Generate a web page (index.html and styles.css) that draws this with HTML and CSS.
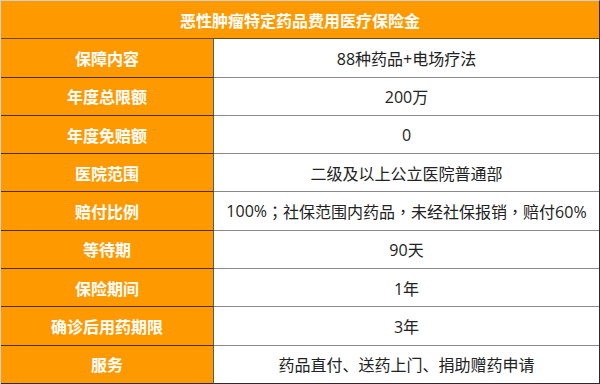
FILE: index.html
```html
<!DOCTYPE html>
<html lang="zh-CN">
<head>
<meta charset="utf-8">
<title>恶性肿瘤特定药品费用医疗保险金</title>
<link rel="stylesheet" href="styles.css">
</head>
<body>
<div class="sheet">
  <div class="title">恶性肿瘤特定药品费用医疗保险金</div>
  <div class="label">保障内容</div><div class="value">88种药品+电场疗法</div>
  <div class="label">年度总限额</div><div class="value">200万</div>
  <div class="label">年度免赔额</div><div class="value">0</div>
  <div class="label">医院范围</div><div class="value">二级及以上公立医院普通部</div>
  <div class="label">赔付比例</div><div class="value">100%<span class="punct">；</span>社保范围内药品<span class="punct">，</span>未经社保报销<span class="punct">，</span>赔付60%</div>
  <div class="label">等待期</div><div class="value">90天</div>
  <div class="label">保险期间</div><div class="value">1年</div>
  <div class="label">确诊后用药期限</div><div class="value">3年</div>
  <div class="label last">服务</div><div class="value last">药品直付、送药上门、捐助赠药申请</div>
</div>
</body>
</html>
```
FILE: styles.css
```css
* { box-sizing: border-box; }
html, body { margin: 0; padding: 0; background: #ffffff; }
.sheet {
  width: 600px;
  height: 384px;
  display: grid;
  grid-template-columns: 213px 1fr;
  grid-template-rows: repeat(10, 1fr);
  border-top: 1px solid #cfcfcf;
  border-left: 1px solid #cfcfcf;
  border-right: 1px solid #2a2a2a;
  font-family: "Open Sans", "Noto Sans CJK SC", sans-serif;
  font-size: 16px;
}
.title, .label, .value {
  display: flex;
  align-items: center;
  justify-content: center;
  white-space: nowrap;
}
.title {
  grid-column: 1 / 3;
  background: #ff9900;
  color: #ffffff;
  font-weight: 700;
  border-bottom: 1px solid #6a4a1a;
}
.label {
  background: #ff9900;
  color: #ffffff;
  font-weight: 700;
  border-bottom: 1px solid #4e3000;
  border-right: 1px solid #5a5a5a;
}
.value {
  color: #222222;
  border-bottom: 1px solid #8a8a8a;
}
.punct { font-family: "Noto Sans CJK TC", sans-serif; }
.label.last, .value.last { border-bottom-color: #2a2a2a; }
```
